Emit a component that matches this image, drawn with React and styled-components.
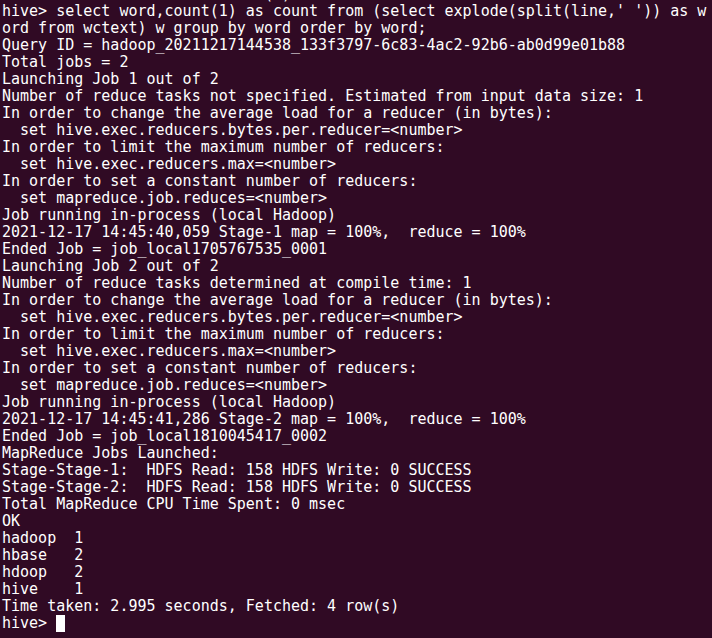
import React from "react";
import styled, { createGlobalStyle } from "styled-components";

const LINES = [
  "                             ( )",
  "hive> select word,count(1) as count from (select explode(split(line,' ')) as w",
  "ord from wctext) w group by word order by word;",
  "Query ID = hadoop_20211217144538_133f3797-6c83-4ac2-92b6-ab0d99e01b88",
  "Total jobs = 2",
  "Launching Job 1 out of 2",
  "Number of reduce tasks not specified. Estimated from input data size: 1",
  "In order to change the average load for a reducer (in bytes):",
  "  set hive.exec.reducers.bytes.per.reducer=<number>",
  "In order to limit the maximum number of reducers:",
  "  set hive.exec.reducers.max=<number>",
  "In order to set a constant number of reducers:",
  "  set mapreduce.job.reduces=<number>",
  "Job running in-process (local Hadoop)",
  "2021-12-17 14:45:40,059 Stage-1 map = 100%,  reduce = 100%",
  "Ended Job = job_local1705767535_0001",
  "Launching Job 2 out of 2",
  "Number of reduce tasks determined at compile time: 1",
  "In order to change the average load for a reducer (in bytes):",
  "  set hive.exec.reducers.bytes.per.reducer=<number>",
  "In order to limit the maximum number of reducers:",
  "  set hive.exec.reducers.max=<number>",
  "In order to set a constant number of reducers:",
  "  set mapreduce.job.reduces=<number>",
  "Job running in-process (local Hadoop)",
  "2021-12-17 14:45:41,286 Stage-2 map = 100%,  reduce = 100%",
  "Ended Job = job_local1810045417_0002",
  "MapReduce Jobs Launched: ",
  "Stage-Stage-1:  HDFS Read: 158 HDFS Write: 0 SUCCESS",
  "Stage-Stage-2:  HDFS Read: 158 HDFS Write: 0 SUCCESS",
  "Total MapReduce CPU Time Spent: 0 msec",
  "OK",
  "hadoop  1",
  "hbase   2",
  "hdoop   2",
  "hive    1",
  "Time taken: 2.995 seconds, Fetched: 4 row(s)",
];

const GlobalStyle = createGlobalStyle`
  html, body {
    margin: 0;
    padding: 0;
    background: #300a24;
    overflow: hidden;
  }
`;

const Terminal = styled.div`
  width: 712px;
  height: 638px;
  overflow: hidden;
  background: #300a24;
  color: #ffffff;
  font-family: "DejaVu Sans Mono", monospace;
  font-size: 15px;
  line-height: 17px;
  padding: 0 0 0 2px;
  box-sizing: border-box;
  display: flex;
  flex-direction: column;
`;

const Scroll = styled.div`
  margin-top: -14px;
`;

const Line = styled.div`
  white-space: pre;
  height: 17px;
`;

const Cursor = styled.span`
  display: inline-block;
  width: 9px;
  height: 17px;
  background: #ffffff;
  vertical-align: top;
`;

export default function App() {
  return (
    <>
      <GlobalStyle />
      <Terminal>
        <Scroll>
          {LINES.map((line, i) => (
            <Line key={i}>{line}</Line>
          ))}
          <Line>
            {"hive> "}
            <Cursor />
          </Line>
        </Scroll>
      </Terminal>
    </>
  );
}
